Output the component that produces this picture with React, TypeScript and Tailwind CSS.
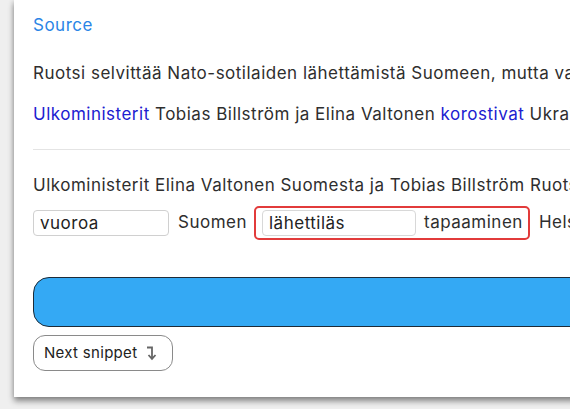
import React from 'react';

function NextArrow() {
  return (
    <svg width="12" height="16" viewBox="0 0 12 16" fill="none" className="text-[#666]">
      <path d="M2 2.5H7V13" stroke="currentColor" strokeWidth="1.8" />
      <path d="M3.5 10L7 13.8L10.5 10" stroke="currentColor" strokeWidth="1.8" fill="none" />
    </svg>
  );
}

export default function App() {
  return (
    <div className="h-[409px] w-[570px] overflow-hidden bg-[#efefef] font-['Inter','Liberation_Sans',sans-serif] text-[17px] tracking-[0.5px] text-[#2e2e2e]">
      <div className="ml-[14px] w-[700px] bg-white pl-[19px] pt-[13px] pb-[26px] shadow-[0_4px_6px_rgba(0,0,0,0.45),-2px_0_4px_rgba(0,0,0,0.06)]">
        <div className="h-6 leading-6 text-[#2a85e6]">Source</div>
        <div className="mt-6 h-6 whitespace-nowrap leading-6">
          Ruotsi selvittää Nato-sotilaiden lähettämistä Suomeen, mutta valmiutta ei ole vielä
        </div>
        <div className="mt-[17px] h-6 whitespace-nowrap leading-6">
          <span className="text-[#2020d0]">Ulkoministerit</span> Tobias Billström ja Elina Valtonen{' '}
          <span className="text-[#2020d0]">korostivat</span> Ukrainan tukemista
        </div>
        <div className="mt-[23px] h-px bg-[#e4e4e4]" />
        <div className="mt-[23px] h-6 whitespace-nowrap leading-6">
          Ulkoministerit Elina Valtonen Suomesta ja Tobias Billström Ruotsista
        </div>
        <div className="mt-[9px] flex h-[34px] items-center whitespace-nowrap">
          <input
            readOnly
            value="vuoroa"
            className="h-[26px] w-[136px] rounded-[4px] border border-[#d0d0d0] px-[6px] text-[17px] tracking-[0.5px] text-[#222] outline-none"
          />
          <span className="ml-[9px]">Suomen</span>
          <span className="ml-[7px] flex h-[34px] items-center rounded-[5px] border-2 border-[#e23b3b] pl-[6px] pr-[5px]">
            <input
              readOnly
              value="lähettiläs"
              className="h-[26px] w-[154px] rounded-[4px] border border-[#d8d8d8] px-[6px] text-[17px] tracking-[0.5px] text-[#222] outline-none"
            />
            <span className="ml-[8px]">tapaaminen</span>
          </span>
          <span className="ml-[9px]">Helsingissä</span>
        </div>
        <div className="mt-[37px] h-[50px] rounded-[16px] border border-[#1d2b38] bg-[#34a9f4]" />
        <div className="mt-[8px]">
          <button className="flex h-[36px] w-[140px] items-center gap-[8px] rounded-[12px] border border-[#8a8a8a] pl-[10px] text-[15px] tracking-[0.3px] text-[#222]">
            Next snippet
            <NextArrow />
          </button>
        </div>
      </div>
    </div>
  );
}
